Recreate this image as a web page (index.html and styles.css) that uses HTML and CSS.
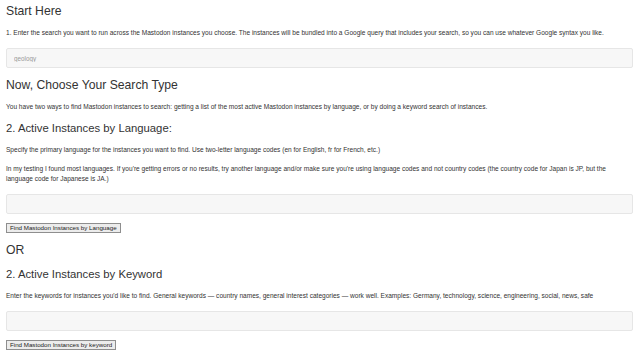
FILE: index.html
```html
<!DOCTYPE html>
<html lang="en">
<head>
  <meta charset="UTF-8" />
  <title>Mastodon Search</title>
  <link rel="stylesheet" href="styles.css">
</head>
<body>

<div class="page">
  <h2 class="title first">Start Here</h2>
  <p class="note">1. Enter the search you want to run across the Mastodon instances you choose. The instances will be bundled into a Google query that includes your search, so you can use whatever Google syntax you like.</p>
  <input type="text" class="field" placeholder="geology" />

  <h2 class="title">Now, Choose Your Search Type</h2>
  <p class="note">You have two ways to find Mastodon instances to search: getting a list of the most active Mastodon instances by language, or by doing a keyword search of instances.</p>

  <h3 class="subtitle">2. Active Instances by Language:</h3>
  <p class="note">Specify the primary language for the instances you want to find. Use two-letter language codes (en for English, fr for French, etc.)</p>
  <p class="note">In my testing I found most languages. If you're getting errors or no results, try another language and/or make sure you're using language codes and not country codes (the country code for Japan is JP, but the language code for Japanese is JA.)</p>
  <input type="text" class="field" />
  <button type="button" class="btn-find">Find Mastodon Instances by Language</button>

  <h2 class="title">OR</h2>

  <h3 class="subtitle">2. Active Instances by Keyword</h3>
  <p class="note">Enter the keywords for instances you'd like to find. General keywords — country names, general interest categories — work well. Examples: Germany, technology, science, engineering, social, news, safe</p>
  <input type="text" class="field" />
  <button type="button" class="btn-find">Find Mastodon Instances by keyword</button>
</div>

</body>
</html>
```

FILE: styles.css
```css
* {
  box-sizing: border-box;
}

body {
  margin: 0;
  padding: 0;
  background: #fff;
  color: #333;
  font-family: "Liberation Sans", Arial, sans-serif;
}

.page {
  padding: 0 6px;
  display: flex;
  flex-direction: column;
  align-items: flex-start;
}

.title {
  font-size: 12.2px;
  font-weight: normal;
  line-height: 16px;
  margin: 9px 0 0;
  color: #333;
}

.title.first {
  margin-top: 3px;
}

.subtitle {
  font-size: 11.3px;
  font-weight: normal;
  line-height: 13px;
  margin: 10px 0 0;
  color: #333;
}

.note {
  font-size: 6.55px;
  line-height: 10px;
  margin: 9px 0 0;
  width: 100%;
}

.subtitle + .note {
  margin-top: 10px;
}

.field {
  display: block;
  width: 100%;
  height: 20px;
  margin-top: 10px;
  padding: 0 7px;
  background: #f7f7f7;
  border: 1px solid #e6e6e6;
  border-radius: 2px;
  font-family: inherit;
  font-size: 6.3px;
  color: #555;
}

.field::placeholder {
  color: #999;
}

.btn-find {
  margin-top: 9px;
  height: 10px;
  padding: 0 3px;
  font-family: inherit;
  font-size: 6.2px;
  line-height: 8px;
  color: #222;
  background: #ececec;
  border: 1px solid #8e8e8e;
  border-radius: 0;
}
```
